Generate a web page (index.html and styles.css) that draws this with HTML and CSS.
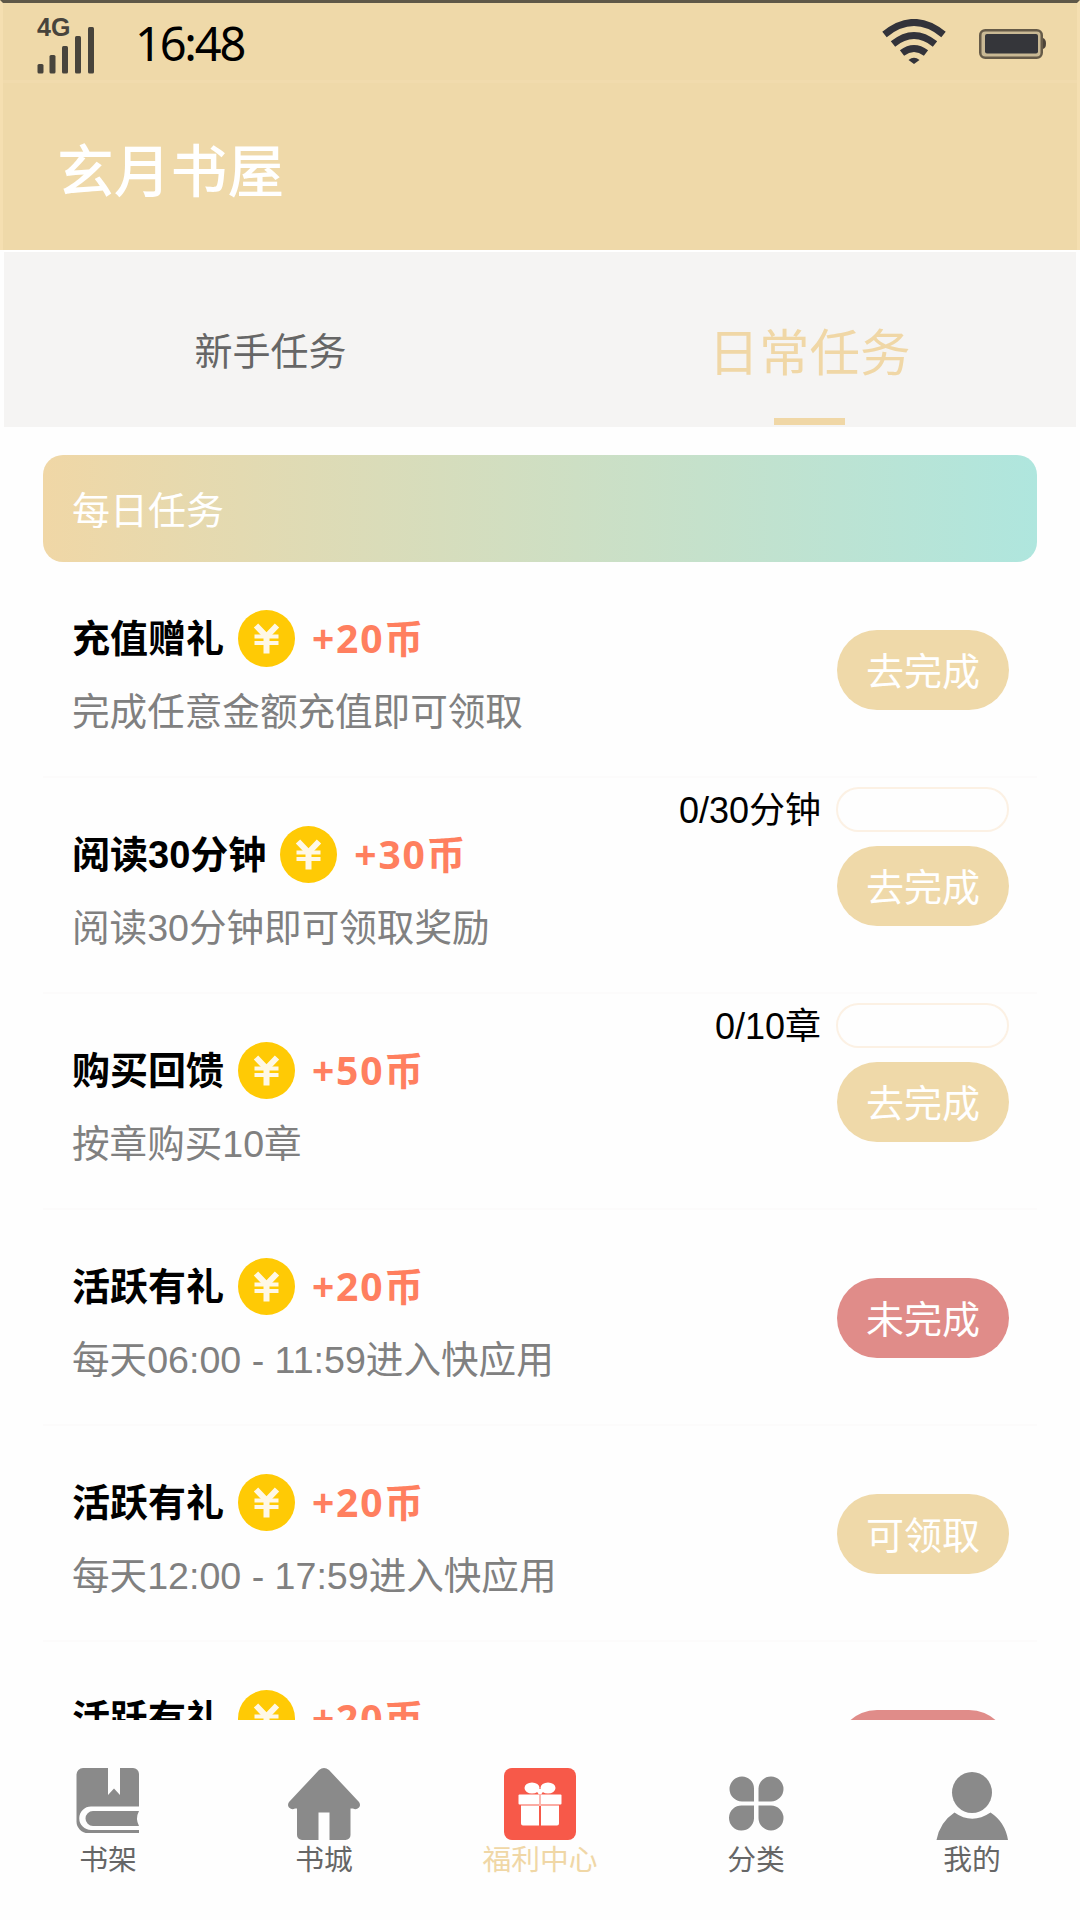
FILE: index.html
```html
<!DOCTYPE html>
<html lang="zh-CN">
<head>
<meta charset="utf-8">
<title>玄月书屋</title>
<link rel="stylesheet" href="styles.css">
</head>
<body>
<svg class="defs" aria-hidden="true">
  <symbol id="coin" viewBox="0 0 57 57">
    <circle cx="28.5" cy="28.5" r="28.5" fill="#ffca05"/>
    <path d="M18 15.500l10.500 11 10.500-11M28.500 26v17.500" fill="none" stroke="#fff8e6" stroke-width="6"/>
    <path d="M16.500 26.500h24M16.500 33h24" fill="none" stroke="#fff8e6" stroke-width="3.800"/>
  </symbol>
</svg>
<div class="app">
  <header class="header">
    <div class="status">
      <div class="signal">
        <span class="network">4G</span>
        <svg width="58" height="48" viewBox="0 0 58 48" fill="#48443c">
          <rect x="0.500" y="38" width="6" height="9.500" rx="1.500"/><rect x="12.500" y="29" width="6" height="18.500" rx="1.500"/><rect x="25" y="20" width="6" height="27.500" rx="1.500"/><rect x="38" y="10" width="6" height="37.500" rx="1.500"/><rect x="51" y="1" width="6" height="46.500" rx="1.500"/>
        </svg>
      </div>
      <time class="clock">16:48</time>
      <svg class="wifi" width="64" height="46" viewBox="0 0 64 46" fill="none" stroke="#33333a" stroke-width="7">
        <path d="M2.500 15.500Q32-8.500 61.500 15.500"/><path d="M11 25Q32 8 53 25"/><path d="M20 34Q32 25 44 34"/>
        <path d="M26.500 41Q32 36.500 37.500 41L32 45z" fill="#33333a" stroke="none"/>
      </svg>
      <svg class="battery" width="67" height="30" viewBox="0 0 67 30">
        <rect x="1.250" y="1.250" width="61.500" height="27.500" rx="5" fill="#c9b994" stroke="#665b48" stroke-width="2.500"/>
        <rect x="6" y="5" width="53" height="19.500" rx="2" fill="#35363a"/>
        <path d="M64 9q3 1 3 5.500t-3 5.500z" fill="#4d4439"/>
      </svg>
    </div>
    <h1 class="brand">玄月书屋</h1>
  </header>

  <nav class="tabs">
    <a class="tab">新手任务</a>
    <a class="tab tab-active">日常任务</a>
  </nav>

  <main class="content">
    <h2 class="banner">每日任务</h2>
    <section class="task">
      <div class="info">
        <div class="title"><span class="name">充值赠礼</span><svg class="coin"><use href="#coin"/></svg><span class="reward">+20币</span></div>
        <p class="desc">完成任意金额充值即可领取</p>
      </div>
      <div class="action"><button class="btn">去完成</button></div>
    </section>
    <section class="task">
      <div class="info">
        <div class="title"><span class="name">阅读30分钟</span><svg class="coin"><use href="#coin"/></svg><span class="reward">+30币</span></div>
        <p class="desc">阅读30分钟即可领取奖励</p>
      </div>
      <div class="action"><div class="progress"><span class="count">0/30分钟</span><span class="track"></span></div><button class="btn">去完成</button></div>
    </section>
    <section class="task">
      <div class="info">
        <div class="title"><span class="name">购买回馈</span><svg class="coin"><use href="#coin"/></svg><span class="reward">+50币</span></div>
        <p class="desc">按章购买10章</p>
      </div>
      <div class="action"><div class="progress"><span class="count">0/10章</span><span class="track"></span></div><button class="btn">去完成</button></div>
    </section>
    <section class="task">
      <div class="info">
        <div class="title"><span class="name">活跃有礼</span><svg class="coin"><use href="#coin"/></svg><span class="reward">+20币</span></div>
        <p class="desc">每天06:00 - 11:59进入快应用</p>
      </div>
      <div class="action"><button class="btn btn-off">未完成</button></div>
    </section>
    <section class="task">
      <div class="info">
        <div class="title"><span class="name">活跃有礼</span><svg class="coin"><use href="#coin"/></svg><span class="reward">+20币</span></div>
        <p class="desc">每天12:00 - 17:59进入快应用</p>
      </div>
      <div class="action"><button class="btn">可领取</button></div>
    </section>
    <section class="task">
      <div class="info">
        <div class="title"><span class="name">活跃有礼</span><svg class="coin"><use href="#coin"/></svg><span class="reward">+20币</span></div>
      </div>
      <div class="action"><button class="btn btn-off"></button></div>
    </section>
  </main>

  <nav class="bottom">
    <a class="item">
      <svg class="icon" viewBox="0 0 72 72">
        <path d="M11 0H36V27L42 20.500 48 27V0H61a6 6 0 0 1 6 6V38.500H19a11.500 11.500 0 0 0 0 23.500H67V65H16A11.500 11.500 0 0 1 4.500 53.500V6.500A6.500 6.500 0 0 1 11 0z"/>
        <path d="M21 43H67q-4 7.500 0 15H21a7.500 7.500 0 0 1 0-15z"/>
      </svg>书架
    </a>
    <a class="item">
      <svg class="icon" viewBox="0 0 72 72">
        <path d="M31 2q5-4 10 0L71 34q2 3 0 5.500-3 3-6 1H62.500V67a5 5 0 0 1-5 5H41.500V44.500H30.500V72H14a5 5 0 0 1-5-5V40.500H7q-3 2-6-1-2-2.500 0-5.500z"/>
      </svg>书城
    </a>
    <a class="item item-active">
      <svg class="icon" viewBox="0 0 72 72">
        <rect width="72" height="72" rx="8" fill="#f75949"/>
        <g fill="#fff">
          <ellipse cx="28" cy="20" rx="7.500" ry="5.500"/><ellipse cx="44" cy="20" rx="7.500" ry="5.500"/>
          <path d="M31 21l5 7 5-7z"/>
          <rect x="14.500" y="26.500" width="43" height="10" rx="1"/>
          <path d="M17 37.500H35V57.500H19a2 2 0 0 1-2-2zM37 37.500H55V55.500a2 2 0 0 1-2 2H37z"/>
        </g>
        <path d="M36 26V38" stroke="#fbb7b0" stroke-width="2"/>
      </svg>福利中心
    </a>
    <a class="item">
      <svg class="icon" viewBox="0 0 72 72">
        <path d="M22 8.500A12 12 0 0 1 34 20.500V33.500H22a12.500 12.500 0 0 1 0-25zM51 8.500a12.500 12.500 0 0 1 0 25H38.500V20.500A12.500 12.500 0 0 1 51 8.500zM22 37.500H34V50.500A12.500 12.500 0 1 1 22 37.500zM51 37.500a12.500 12.500 0 1 1-12.500 12.500V37.500z"/>
      </svg>分类
    </a>
    <a class="item">
      <svg class="icon" viewBox="0 0 72 72">
        <ellipse cx="36" cy="24.500" rx="20" ry="20.500"/>
        <path d="M18.500 44.500Q36 57 54.500 44.500 69 54 72 72H0.500Q4 54 18.500 44.500z"/>
      </svg>我的
    </a>
  </nav>
</div>
</body>
</html>
```

FILE: styles.css
```css
* { box-sizing: border-box; margin: 0; padding: 0; }

body {
  width: 1080px;
  height: 1920px;
  overflow: hidden;
  background: #fefefe;
  font-family: "Liberation Sans", "Noto Sans CJK SC", sans-serif;
  font-size: 37.6px;
  color: #000;
}

.defs { position: absolute; width: 0; height: 0; }

.app { height: 1920px; display: flex; flex-direction: column; }

.header {
  height: 250px;
  flex: none;
  background: #efd9a9;
  border-top: 3px solid #5f5848;
  border-left: 3px solid #f5dfb1;
  border-right: 3px solid #f5dfb1;
}

.status {
  height: 80px;
  padding: 0 31px 0 34px;
  display: flex;
  align-items: center;
  border-bottom: 3px solid #f1dbad;
}

.signal { width: 58px; height: 60px; margin-top: 5px; display: grid; }
.signal > * { grid-area: 1 / 1; }
.signal svg { align-self: end; }
.network { padding-top: 1px; font: bold 25px/24px "Liberation Sans", sans-serif; color: #48443c; }

.clock {
  margin: 0 auto 0 40px;
  padding-top: 2px;
  font: 47px/76px "Noto Sans", sans-serif;
  letter-spacing: -2.2px;
}

.wifi { margin-right: 33px; }
.battery { margin-top: 5px; }

.brand {
  padding-left: 54px;
  font-size: 56.8px;
  font-weight: 500;
  line-height: 180px;
  color: #fff;
}

.tabs {
  height: 177px;
  flex: none;
  margin: 0 4px;
  display: flex;
  background: #f5f4f3;
  border-top: 2px solid #fff;
}

.tab {
  flex: 1;
  display: flex;
  flex-direction: column;
  align-items: center;
  padding-right: 4px;
  font-size: 38px;
  line-height: 200px;
  color: #666;
}

.tab-active { padding: 2px 0 0 2px; font-size: 50.5px; color: #f0d7a6; }
.tab-active::after { content: ""; width: 71px; height: 7px; margin-top: -36px; background: #f0d7a6; }

.content { height: 1293px; flex: none; padding: 28px 43px 0; overflow: hidden; }

.banner {
  height: 107px;
  padding-left: 29px;
  border-radius: 20px;
  background: linear-gradient(90deg, #f0d7a6, #afe6de);
  font-size: 38px;
  font-weight: 400;
  line-height: 112px;
  color: #fff;
}

.task {
  height: 216px;
  padding: 0 28px 0 29px;
  display: flex;
  justify-content: space-between;
  border-bottom: 2px solid #fcfbfb;
}

.info { padding-top: 47px; }

.title {
  display: flex;
  align-items: center;
  height: 58px;
  font-weight: 700;
  font-size: 38px;
  white-space: nowrap;
}

.name, .reward { height: 58px; }
.name { line-height: 60px; }

.coin { width: 57px; height: 57px; margin: 0 17px 0 14px; }

.reward {
  font-family: "Open Sans", "Noto Sans CJK SC", sans-serif;
  font-size: 39px;
  line-height: 57px;
  letter-spacing: 1.8px;
  color: #ff7f5f;
}

.desc { margin-top: 17px; line-height: 57px; color: #808080; white-space: nowrap; }

.action {
  height: 148px;
  display: flex;
  flex-direction: column;
  align-items: flex-end;
  justify-content: flex-end;
  gap: 14px;
}

.progress {
  height: 45px;
  display: flex;
  align-items: center;
  gap: 15px;
  font-size: 36px;
  line-height: 45px;
}

.count { padding-top: 2px; }

.track { width: 173px; height: 45px; border: 2px solid #fcf1e4; border-radius: 23px; }

.btn {
  width: 172px;
  height: 80px;
  border: 0;
  border-radius: 40px;
  background: #efd9a9;
  font: inherit;
  font-size: 38px;
  line-height: 84px;
  color: #fff;
}

.btn-off { background: #e08c89; }

.bottom { flex: 1; padding-top: 48px; display: flex; background: #fefefe; }

.item {
  flex: 1;
  display: flex;
  flex-direction: column;
  align-items: center;
  font-size: 28.8px;
  line-height: 40px;
  color: #666;
}

.item-active { color: #f0d7a6; }

.icon { width: 72px; height: 72px; fill: #8a8a8a; }
```
